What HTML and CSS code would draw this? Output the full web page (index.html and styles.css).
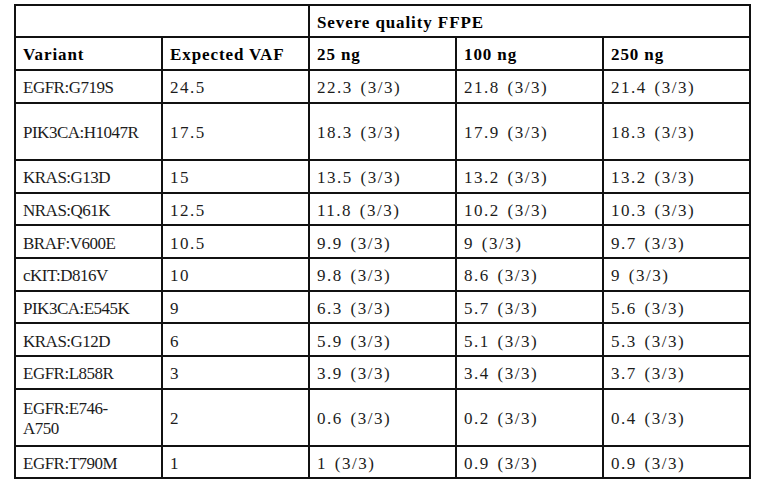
FILE: index.html
```html
<!DOCTYPE html>
<html lang="en">
<head>
<meta charset="utf-8">
<title>Severe quality FFPE</title>
<link rel="stylesheet" href="styles.css">
</head>
<body>
<table class="vaf">
  <colgroup>
    <col class="c"><col class="c"><col class="c"><col class="c"><col class="c">
  </colgroup>
  <thead>
    <tr class="h1">
      <th colspan="2"></th>
      <th colspan="3">Severe quality FFPE</th>
    </tr>
    <tr class="h2">
      <th>Variant</th>
      <th>Expected VAF</th>
      <th>25 ng</th>
      <th>100 ng</th>
      <th>250 ng</th>
    </tr>
  </thead>
  <tbody>
    <tr><td class="var">EGFR:G719S</td><td class="num">24.5</td><td class="num">22.3 (3/3)</td><td class="num">21.8 (3/3)</td><td class="num">21.4 (3/3)</td></tr>
    <tr class="tall"><td class="var">PIK3CA:H1047R</td><td class="num">17.5</td><td class="num">18.3 (3/3)</td><td class="num">17.9 (3/3)</td><td class="num">18.3 (3/3)</td></tr>
    <tr><td class="var">KRAS:G13D</td><td class="num">15</td><td class="num">13.5 (3/3)</td><td class="num">13.2 (3/3)</td><td class="num">13.2 (3/3)</td></tr>
    <tr><td class="var">NRAS:Q61K</td><td class="num">12.5</td><td class="num">11.8 (3/3)</td><td class="num">10.2 (3/3)</td><td class="num">10.3 (3/3)</td></tr>
    <tr><td class="var">BRAF:V600E</td><td class="num">10.5</td><td class="num">9.9 (3/3)</td><td class="num">9 (3/3)</td><td class="num">9.7 (3/3)</td></tr>
    <tr><td class="var">cKIT:D816V</td><td class="num">10</td><td class="num">9.8 (3/3)</td><td class="num">8.6 (3/3)</td><td class="num">9 (3/3)</td></tr>
    <tr><td class="var">PIK3CA:E545K</td><td class="num">9</td><td class="num">6.3 (3/3)</td><td class="num">5.7 (3/3)</td><td class="num">5.6 (3/3)</td></tr>
    <tr><td class="var">KRAS:G12D</td><td class="num">6</td><td class="num">5.9 (3/3)</td><td class="num">5.1 (3/3)</td><td class="num">5.3 (3/3)</td></tr>
    <tr><td class="var">EGFR:L858R</td><td class="num">3</td><td class="num">3.9 (3/3)</td><td class="num">3.4 (3/3)</td><td class="num">3.7 (3/3)</td></tr>
    <tr class="tall"><td class="var">EGFR:E746-<br>A750</td><td class="num">2</td><td class="num">0.6 (3/3)</td><td class="num">0.2 (3/3)</td><td class="num">0.4 (3/3)</td></tr>
    <tr><td class="var">EGFR:T790M</td><td class="num">1</td><td class="num">1 (3/3)</td><td class="num">0.9 (3/3)</td><td class="num">0.9 (3/3)</td></tr>
  </tbody>
</table>
</body>
</html>
```

FILE: styles.css
```css
html, body {
  margin: 0;
  background: #ffffff;
}

body {
  padding: 4px 0 0 14px;
  font-family: "Liberation Serif", "Times New Roman", serif;
  font-size: 17px;
  color: #1c1c1c;
}

.vaf {
  border-collapse: collapse;
  table-layout: fixed;
  width: 737px;
}

.vaf .c {
  width: 147px;
}

.vaf th,
.vaf td {
  border: 2px solid #111111;
  padding: 4px 7px 0 7px;
  text-align: left;
  vertical-align: middle;
  line-height: 20px;
}

.vaf th {
  font-weight: bold;
  color: #000000;
  letter-spacing: 0.9px;
}

.h1 th { height: 25.5px; }
.h2 th { height: 27.5px; }

.vaf tbody td { height: 26.67px; }
.vaf tbody .tall td { height: 51.25px; }

.var {
  letter-spacing: -0.5px;
}

.num {
  letter-spacing: 1.5px;
  word-spacing: 2px;
}
```
